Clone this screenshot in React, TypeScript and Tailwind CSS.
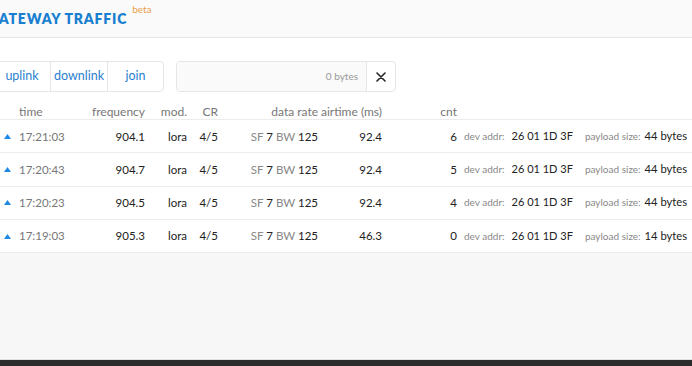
import React from "react";

const rows = [
  { time: "17:21:03", freq: "904.1", airtime: "92.4", cnt: "6", size: "44 bytes" },
  { time: "17:20:43", freq: "904.7", airtime: "92.4", cnt: "5", size: "44 bytes" },
  { time: "17:20:23", freq: "904.5", airtime: "92.4", cnt: "4", size: "44 bytes" },
  { time: "17:19:03", freq: "905.3", airtime: "46.3", cnt: "0", size: "14 bytes" },
];

function UpTriangle() {
  return (
    <svg width="7" height="5" viewBox="0 0 7 5" className="block">
      <polygon points="3.5,0 7,5 0,5" fill="#1e88e5" />
    </svg>
  );
}

export default function App() {
  return (
    <div
      className="w-[692px] h-[366px] flex flex-col bg-[#f7f7f7] overflow-hidden text-[#222] whitespace-nowrap"
      style={{ fontFamily: "Lato, 'Open Sans', sans-serif" }}
    >
      <header className="h-[38px] shrink-0 bg-[#fafafa] border-b border-[#e6e6e6] flex items-center">
        <div className="ml-[-12px] flex items-start">
          <span className="text-[14px] font-extrabold tracking-[0.8px] text-[#1a7fd0] leading-none mt-[1px]">
            GATEWAY TRAFFIC
          </span>
          <span className="ml-[5px] mt-[-7px] text-[10px] text-[#e9a14a] leading-none">beta</span>
        </div>
      </header>

      <main className="bg-white shrink-0">
        <div className="flex pt-[23px] gap-3">
          <div className="ml-[-7px] shrink-0 flex h-[31px] border border-[#e6e6e6] rounded-[4px] text-[12.5px] text-[#2a7fd0]">
            <div className="w-[57px] flex items-center justify-center border-r border-[#e6e6e6]">uplink</div>
            <div className="w-[57px] flex items-center justify-center border-r border-[#e6e6e6]">downlink</div>
            <div className="w-[55px] flex items-center justify-center">join</div>
          </div>
          <div className="flex shrink-0 h-[31px] w-[220px] border border-[#e6e6e6] rounded-[4px] overflow-hidden">
            <div className="flex-1 bg-[#fafafa] flex items-center justify-end pr-[8px] text-[10px] text-[#999]">
              0 bytes
            </div>
            <div className="w-[29px] border-l border-[#e6e6e6] flex items-center justify-center">
              <svg width="10" height="10" viewBox="0 0 10 10">
                <path d="M1 1 L9 9 M9 1 L1 9" stroke="#222" strokeWidth="1.6" strokeLinecap="round" />
              </svg>
            </div>
          </div>
        </div>

        <div className="mt-[12px] text-[11.5px]">
          <div className="flex h-[16px] items-center border-b border-[#ececec] text-[#777] text-[12px]">
            <div className="w-[14px] shrink-0" />
            <div className="w-[76px] shrink-0 pl-[5px]">time</div>
            <div className="w-[55px] shrink-0 text-right">frequency</div>
            <div className="w-[42px] shrink-0 text-right">mod.</div>
            <div className="w-[31px] shrink-0 text-right">CR</div>
            <div className="w-[100px] shrink-0 text-right">data rate</div>
            <div className="w-[64px] shrink-0 text-right">airtime (ms)</div>
            <div className="w-[75px] shrink-0 text-right">cnt</div>
          </div>
          {rows.map((r) => (
            <div key={r.time} className="flex h-[33.3px] items-center border-b border-[#ececec]">
              <div className="w-[14px] shrink-0 pl-[4px]">
                <UpTriangle />
              </div>
              <div className="w-[76px] shrink-0 pl-[5px] text-[#777]">{r.time}</div>
              <div className="w-[55px] shrink-0 text-right">{r.freq}</div>
              <div className="w-[42px] shrink-0 text-right">lora</div>
              <div className="w-[31px] shrink-0 text-right">4/5</div>
              <div className="w-[100px] shrink-0 text-right">
                <span className="text-[#888]">SF</span> 7 <span className="text-[#888]">BW</span> 125
              </div>
              <div className="w-[64px] shrink-0 text-right">{r.airtime}</div>
              <div className="w-[75px] shrink-0 text-right">{r.cnt}</div>
              <div className="flex shrink-0 items-center pl-[7px]">
                <span className="text-[10px] text-[#888]">dev addr:</span>
                <span className="ml-[7px] text-[11px]">26 01 1D 3F</span>
                <span className="ml-[12px] text-[10px] text-[#888]">payload size:</span>
                <span className="ml-[4px] text-[11.2px]">{r.size}</span>
              </div>
            </div>
          ))}
        </div>
      </main>

      <div className="flex-1" />
      <div className="h-[7px] shrink-0 bg-[#2b2b2b] border-t border-[#e0e0e0]" />
    </div>
  );
}
